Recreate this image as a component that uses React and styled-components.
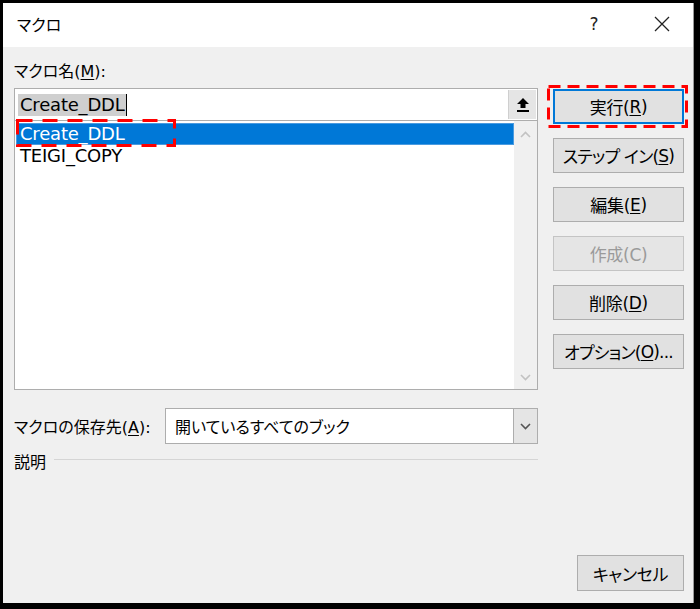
import styled, { createGlobalStyle } from 'styled-components';

const GlobalStyle = createGlobalStyle`
  html, body {
    margin: 0;
    padding: 0;
    background: #000;
  }
  body {
    font-family: "DejaVu Sans", "Noto Sans CJK JP", sans-serif;
    font-feature-settings: "palt";
    font-size: 17px;
    color: #000;
  }
`;

const Screen = styled.div`
  width: 700px;
  height: 609px;
  padding: 3px 0 0 3px;
  box-sizing: border-box;
  background: #000;
`;

const Dialog = styled.div`
  width: 691px;
  height: 600px;
  display: flex;
  flex-direction: column;
  background: #f0f0f0;
  border-right: 1px solid #9a9a9a;
  box-sizing: border-box;
`;

const TitleBar = styled.div`
  height: 44px;
  flex: none;
  display: flex;
  align-items: center;
  background: #fff;
  padding-left: 14px;
`;

const Title = styled.span`
  flex: 1;
  font-size: 16px;
  margin-top: -2px;
`;

const HelpMark = styled.span`
  width: 24px;
  text-align: center;
  font-size: 17px;
  margin-right: 47px;
  margin-top: -2px;
  color: #222;
`;

const CloseButton = styled.span`
  display: flex;
  align-items: center;
  justify-content: center;
  width: 18px;
  margin-right: 22px;
  margin-top: -2px;
`;

const Body = styled.div`
  flex: 1;
  display: flex;
  gap: 15px;
  padding: 0 8px 12px 11px;
`;

const LeftColumn = styled.div`
  width: 524px;
  display: flex;
  flex-direction: column;
  padding-top: 14px;
`;

const FieldLabel = styled.div`
  height: 22px;
  line-height: 22px;
  white-space: nowrap;
  font-size: 16px;
`;

const Key = styled.u`
  text-underline-offset: 2px;
`;

const NameInput = styled.div`
  margin-top: 5px;
  height: 33px;
  box-sizing: border-box;
  border: 1px solid #adadad;
  background: #fff;
  display: flex;
  align-items: center;
  padding-left: 3px;
`;

const SelectedText = styled.span`
  background: #cfcfcf;
  padding: 0 1px 0 2px;
  line-height: 22px;
  font-size: 18px;
  letter-spacing: -0.2px;
  border-right: 1.5px solid #000;
`;

const InputSpacer = styled.div`
  flex: 1;
`;

const UploadButton = styled.div`
  width: 27px;
  height: 29px;
  margin-right: 1px;
  background: #e5e5e5;
  border-left: 1px solid #cfcfcf;
  display: flex;
  align-items: center;
  justify-content: center;
`;

const ListBox = styled.div`
  position: relative;
  height: 269px;
  box-sizing: border-box;
  border: 1px solid #adadad;
  border-top: none;
  background: #fff;
  display: flex;
`;

const ListItems = styled.div`
  flex: 1;
  padding: 2px 0 0 1px;
`;

const ListRow = styled.div`
  height: 22px;
  line-height: 20px;
  padding-left: 3px;
  font-size: 18px;
  letter-spacing: -0.2px;
  background: ${(p) => (p.selected ? '#0078d7' : 'transparent')};
  color: ${(p) => (p.selected ? '#fff' : '#000')};
  box-sizing: border-box;
  border: 1px solid ${(p) => (p.selected ? '#4a9be0' : 'transparent')};
`;

const ScrollBar = styled.div`
  width: 23px;
  background: #f0f0f0;
  display: flex;
  flex-direction: column;
  justify-content: space-between;
  align-items: center;
  padding: 10px 0 8px;
`;

const Marker = styled.svg`
  position: absolute;
  left: ${(p) => p.x}px;
  top: ${(p) => p.y}px;
  overflow: visible;
  pointer-events: none;
`;

const SaveRow = styled.div`
  margin-top: 18px;
  display: flex;
  align-items: center;
`;

const SaveLabel = styled.div`
  width: 151px;
  font-size: 16px;
  white-space: nowrap;
`;

const ComboBox = styled.div`
  flex: 1;
  height: 36px;
  box-sizing: border-box;
  border: 1px solid #adadad;
  background: #fff;
  display: flex;
  align-items: center;
  padding-left: 9px;
  font-size: 16px;
`;

const ComboText = styled.span`
  flex: 1;
`;

const ComboArrow = styled.div`
  width: 23px;
  height: 34px;
  background: #e5e5e5;
  border-left: 1px solid #adadad;
  display: flex;
  align-items: center;
  justify-content: center;
`;

const DescriptionRow = styled.div`
  margin-top: 5px;
  display: flex;
  align-items: center;
  gap: 8px;
  font-size: 16px;
`;

const Rule = styled.div`
  flex: 1;
  height: 1px;
  background: #d5d5d5;
  margin-top: -3px;
`;

const RightColumn = styled.div`
  width: 131px;
  display: flex;
  flex-direction: column;
  gap: 14px;
  padding-top: 42px;
`;

const ButtonWrap = styled.div`
  position: relative;
`;

const Button = styled.div`
  height: 35px;
  box-sizing: border-box;
  display: flex;
  align-items: center;
  justify-content: center;
  white-space: nowrap;
  letter-spacing: ${(p) => (p.tight ? '-0.8px' : '-0.3px')};
  background: ${(p) => (p.disabled ? '#e5e5e5' : '#e1e1e1')};
  border: ${(p) => (p.primary ? '2px solid #0078d7' : `1px solid ${p.disabled ? '#c4c4c4' : '#adadad'}`)};
  color: ${(p) => (p.disabled ? '#9a9a9a' : '#000')};
  font-size: 17px;
`;

const CancelButton = styled(Button)`
  margin-top: auto;
  align-self: flex-end;
  width: 107px;
  height: 36px;
`;

function DashedBox({ x, y, w, h, dash }) {
  return (
    <Marker x={x} y={y} width={w} height={h}>
      <rect
        x="1.5"
        y="1.5"
        width={w - 3}
        height={h - 3}
        fill="none"
        stroke="#ff0000"
        strokeWidth="3"
        strokeDasharray={dash}
      />
    </Marker>
  );
}

function Chevron({ up, color = '#a8a8a8' }) {
  return (
    <svg width="11" height="7" viewBox="0 0 11 7">
      <path
        d={up ? 'M1 6 L5.5 1.5 L10 6' : 'M1 1 L5.5 5.5 L10 1'}
        fill="none"
        stroke={color}
        strokeWidth="1.6"
      />
    </svg>
  );
}

export default function App() {
  return (
    <Screen>
      <GlobalStyle />
      <Dialog>
        <TitleBar>
          <Title>マクロ</Title>
          <HelpMark>?</HelpMark>
          <CloseButton>
            <svg width="16" height="16" viewBox="0 0 16 16">
              <path d="M1 1 L15 15 M15 1 L1 15" stroke="#222" strokeWidth="1.3" />
            </svg>
          </CloseButton>
        </TitleBar>
        <Body>
          <LeftColumn>
            <FieldLabel>
              マクロ名(<Key>M</Key>):
            </FieldLabel>
            <NameInput>
              <SelectedText>Create_DDL</SelectedText>
              <InputSpacer />
              <UploadButton>
                <svg width="14" height="16" viewBox="0 0 14 16">
                  <path d="M7 1 L1 7 H4.5 V11 H9.5 V7 H13 Z" fill="#000" />
                  <rect x="1" y="13" width="12" height="2" fill="#000" />
                </svg>
              </UploadButton>
            </NameInput>
            <ListBox>
              <ListItems>
                <ListRow selected>Create_DDL</ListRow>
                <ListRow>TEIGI_COPY</ListRow>
              </ListItems>
              <ScrollBar>
                <Chevron up color="#c2c2c2" />
                <Chevron color="#c2c2c2" />
              </ScrollBar>
              <DashedBox x={1} y={-2} w={160} h={28} dash="15 10" />
            </ListBox>
            <SaveRow>
              <SaveLabel>
                マクロの保存先(<Key>A</Key>):
              </SaveLabel>
              <ComboBox>
                <ComboText>開いているすべてのブック</ComboText>
                <ComboArrow>
                  <Chevron color="#555" />
                </ComboArrow>
              </ComboBox>
            </SaveRow>
            <DescriptionRow>
              説明
              <Rule />
            </DescriptionRow>
          </LeftColumn>
          <RightColumn>
            <ButtonWrap>
              <Button primary>
                実行(<Key>R</Key>)
              </Button>
              <DashedBox x={-6} y={-4} w={141} h={43} dash="12 7" />
            </ButtonWrap>
            <Button tight>
              ステップ イン(<Key>S</Key>)
            </Button>
            <Button>
              編集(<Key>E</Key>)
            </Button>
            <Button disabled>作成(C)</Button>
            <Button>
              削除(<Key>D</Key>)
            </Button>
            <Button tight>
              オプション(<Key>O</Key>)...
            </Button>
            <CancelButton>キャンセル</CancelButton>
          </RightColumn>
        </Body>
      </Dialog>
    </Screen>
  );
}
